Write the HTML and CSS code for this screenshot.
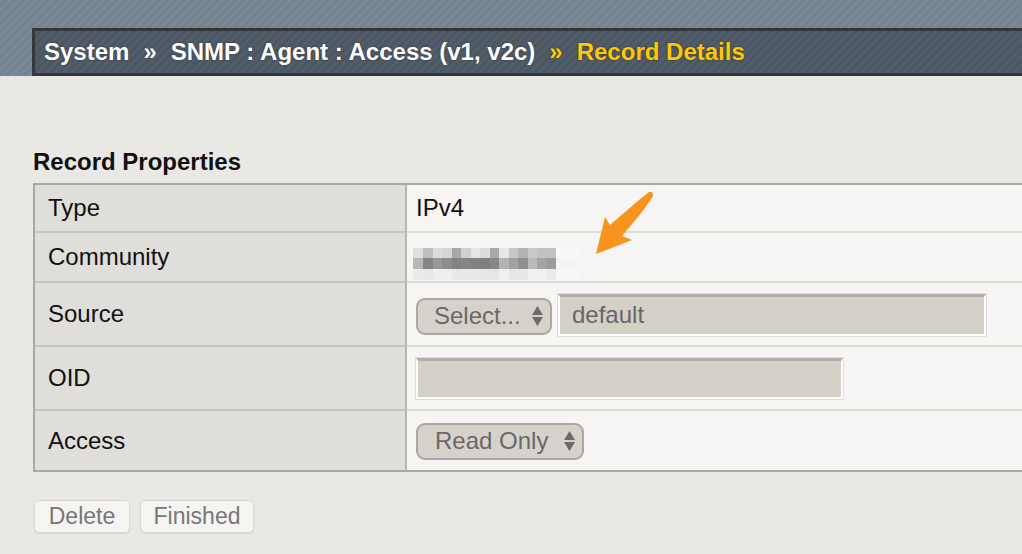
FILE: index.html
```html
<!DOCTYPE html>
<html>
<head>
<meta charset="utf-8">
<link rel="stylesheet" href="styles.css">
</head>
<body>
<div class="topbar">
  <div class="crumbs">
    <span>System</span><span class="sep">»</span><span>SNMP : Agent : Access (v1, v2c)</span><span class="sep cur">»</span><span class="cur">Record Details</span>
  </div>
</div>

<h2 class="heading">Record Properties</h2>

<div class="props">
  <div class="row r-type">
    <div class="lbl">Type</div>
    <div class="val">IPv4</div>
  </div>
  <div class="row r-comm">
    <div class="lbl">Community</div>
    <div class="val comm">
      <svg class="blur" width="166" height="32" viewBox="0 0 166 32">
        <g>
          <rect x="0" y="0" width="10" height="10" fill="#e0e0e0"/>
          <rect x="10" y="0" width="10" height="10" fill="#bdbdbd"/>
          <rect x="20" y="0" width="9" height="10" fill="#dadcdc"/>
          <rect x="29" y="0" width="10" height="10" fill="#d8d6d2"/>
          <rect x="39" y="0" width="9" height="10" fill="#a7a7a7"/>
          <rect x="48" y="0" width="10" height="10" fill="#cfd0d2"/>
          <rect x="58" y="0" width="9" height="10" fill="#e5e5e5"/>
          <rect x="67" y="0" width="10" height="10" fill="#dcdcdc"/>
          <rect x="77" y="0" width="9" height="10" fill="#a9a8a6"/>
          <rect x="86" y="0" width="10" height="10" fill="#e6e6e6"/>
          <rect x="96" y="0" width="9" height="10" fill="#cac6c3"/>
          <rect x="105" y="0" width="10" height="10" fill="#b3b3b3"/>
          <rect x="115" y="0" width="9" height="10" fill="#c9c9c9"/>
          <rect x="124" y="0" width="10" height="10" fill="#c2c2c2"/>
          <rect x="134" y="0" width="9" height="10" fill="#c0c2c2"/>
          <rect x="143" y="0" width="23" height="10" fill="#f8f8f8"/>
        </g>
        <g>
          <rect x="0" y="10" width="10" height="11" fill="#b9b6b3"/>
          <rect x="10" y="10" width="10" height="11" fill="#868688"/>
          <rect x="20" y="10" width="9" height="11" fill="#98989a"/>
          <rect x="29" y="10" width="10" height="11" fill="#8c8c8a"/>
          <rect x="39" y="10" width="9" height="11" fill="#828280"/>
          <rect x="48" y="10" width="10" height="11" fill="#858487"/>
          <rect x="58" y="10" width="9" height="11" fill="#808082"/>
          <rect x="67" y="10" width="10" height="11" fill="#7f7f7d"/>
          <rect x="77" y="10" width="9" height="11" fill="#878789"/>
          <rect x="86" y="10" width="10" height="11" fill="#b4b4b4"/>
          <rect x="96" y="10" width="9" height="11" fill="#a4a09d"/>
          <rect x="105" y="10" width="10" height="11" fill="#8f8f91"/>
          <rect x="115" y="10" width="9" height="11" fill="#bbbbbb"/>
          <rect x="124" y="10" width="10" height="11" fill="#a4a4a2"/>
          <rect x="134" y="10" width="9" height="11" fill="#999b9d"/>
          <rect x="143" y="10" width="23" height="11" fill="#f4f4f4"/>
        </g>
        <g>
          <rect x="0" y="21" width="10" height="11" fill="#ebebeb"/>
          <rect x="10" y="21" width="10" height="11" fill="#e8e8e8"/>
          <rect x="20" y="21" width="19" height="11" fill="#eeeeee"/>
          <rect x="39" y="21" width="28" height="11" fill="#e9e9e9"/>
          <rect x="67" y="21" width="19" height="11" fill="#e6e6e6"/>
          <rect x="86" y="21" width="10" height="11" fill="#f0f0f0"/>
          <rect x="96" y="21" width="19" height="11" fill="#e7e7e7"/>
          <rect x="115" y="21" width="19" height="11" fill="#f1f1f1"/>
          <rect x="134" y="21" width="9" height="11" fill="#e9e9e9"/>
          <rect x="143" y="21" width="23" height="11" fill="#f7f7f7"/>
        </g>
      </svg>
      <svg class="arrow" width="66" height="68" viewBox="0 0 66 68">
        <path d="M59,2 Q63,1 63,6 C55,19 44,32 32,46 L42,50 L6,64 L15,27 L20,35 C33,24 46,12 59,2 Z" fill="#f7941d"/>
      </svg>
    </div>
  </div>
  <div class="row r-src">
    <div class="lbl">Source</div>
    <div class="val">
      <div class="select sel-src"><span>Select...</span>
        <svg width="11" height="20" viewBox="0 0 11 20"><path d="M0,9 L5.5,0 L11,9 Z M0,11 L11,11 L5.5,20 Z" fill="#6a6a6a"/></svg>
      </div>
      <div class="input in-src">default</div>
    </div>
  </div>
  <div class="row r-oid">
    <div class="lbl">OID</div>
    <div class="val">
      <div class="input in-oid"></div>
    </div>
  </div>
  <div class="row r-acc">
    <div class="lbl">Access</div>
    <div class="val">
      <div class="select sel-acc"><span>Read Only</span>
        <svg width="11" height="20" viewBox="0 0 11 20"><path d="M0,9 L5.5,0 L11,9 Z M0,11 L11,11 L5.5,20 Z" fill="#6a6a6a"/></svg>
      </div>
    </div>
  </div>
</div>

<div class="actions">
  <button class="btn btn-del">Delete</button>
  <button class="btn btn-fin">Finished</button>
</div>
</body>
</html>
```

FILE: styles.css
```css
html, body {
  margin: 0;
  padding: 0;
}
body {
  width: 1022px;
  height: 554px;
  overflow: hidden;
  background: #eae8e4;
  font-family: "Liberation Sans", Arial, sans-serif;
  color: #111;
}

.topbar {
  padding-top: 28px;
  padding-left: 32px;
  background: repeating-linear-gradient(135deg, #7b8896 0 3px, #75828f 3px 6px);
}
.crumbs {
  height: 42px;
  border: 3px solid #34383d;
  border-right: none;
  background: repeating-linear-gradient(135deg, #535d69 0 3px, #4d5763 3px 6px);
  display: flex;
  align-items: center;
  padding-left: 9px;
  color: #fff;
  font-weight: bold;
  font-size: 24px;
  white-space: nowrap;
  text-shadow: 0 0 2px rgba(20, 24, 30, 0.7);
}
.crumbs .sep {
  margin: 0 14px 0 14px;
  font-size: 24px;
}
.crumbs .cur {
  color: #ffc800;
}

.heading {
  margin: 72px 0 7px 33px;
  font-size: 24px;
  line-height: 28px;
  font-weight: bold;
  color: #111;
}

.props {
  margin-left: 33px;
  border-top: 2px solid #a9a8a6;
  border-left: 2px solid #a9a8a6;
  border-bottom: 2px solid #a9a8a6;
}
.row {
  display: grid;
  grid-template-columns: 372px 1fr;
}
.lbl {
  background: #dfdeda;
  border-right: 2px solid #b5b4b1;
  border-bottom: 2px solid #c6c5c2;
  padding-left: 13px;
  display: flex;
  align-items: center;
  font-size: 24px;
  color: #111;
}
.val {
  background: #f6f5f3;
  border-bottom: 2px solid #dcdbd8;
  padding-left: 9px;
  display: flex;
  align-items: center;
  font-size: 24px;
  color: #111;
}
.r-acc .lbl, .r-acc .val {
  border-bottom: none;
}
.r-type { height: 48px; }
.r-comm { height: 50px; }
.r-src { height: 64px; }
.r-oid { height: 64px; }
.r-acc { height: 59px; }

.comm {
  position: relative;
  padding-left: 6px;
}
.blur {
  display: block;
  margin-top: 14px;
}
.arrow {
  position: absolute;
  left: 183px;
  top: -43px;
}

.select {
  box-sizing: border-box;
  height: 37px;
  border: 2px solid #a8a7a3;
  border-radius: 9px;
  background: #d6d2cb;
  display: flex;
  align-items: center;
  justify-content: space-between;
  padding: 0 7px 0 16px;
  color: #686868;
  font-size: 24px;
}
.sel-src {
  width: 136px;
  margin-top: 4px;
}
.sel-acc {
  width: 168px;
  padding-left: 17px;
  margin-top: 1px;
}
.input {
  box-sizing: border-box;
  background: #d4d0c8;
  border: 2px solid #fff;
  border-top: 3px solid #b1b0ae;
  box-shadow: 0 0 0 1px #dedcd9;
  color: #666;
  font-size: 24px;
  display: flex;
  align-items: center;
}
.in-src {
  width: 428px;
  height: 42px;
  margin-left: 6px;
  margin-top: 1px;
  padding-left: 12px;
}
.in-oid {
  width: 427px;
  height: 41px;
}

.actions {
  margin: 28px 0 0 34px;
  display: flex;
  gap: 10px;
}
.btn {
  height: 33px;
  box-sizing: border-box;
  border: 1px solid #d8d7d4;
  border-radius: 5px;
  background: #f5f4f2;
  box-shadow: 0 1px 1px rgba(0, 0, 0, 0.08);
  color: #777;
  font-family: "Liberation Sans", Arial, sans-serif;
  font-size: 23px;
  padding: 0;
}
.btn-del { width: 96px; }
.btn-fin { width: 114px; }
```
